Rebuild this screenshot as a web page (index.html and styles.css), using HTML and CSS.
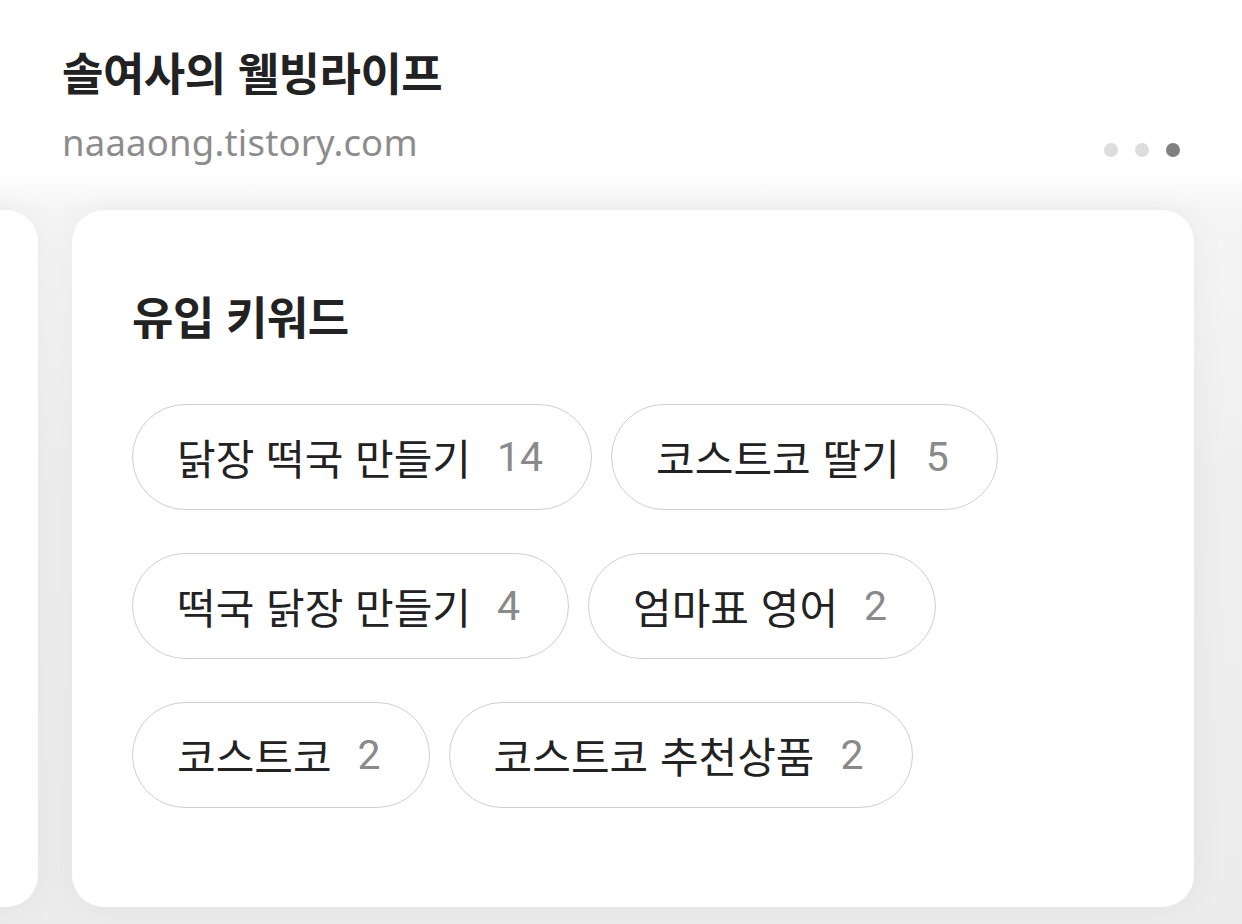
FILE: index.html
```html
<!DOCTYPE html>
<html lang="ko">
<head>
<meta charset="utf-8">
<title>유입 키워드</title>
<link rel="stylesheet" href="styles.css">
</head>
<body>
<header class="header">
  <h1 class="blog-title">솔여사의 웰빙라이프</h1>
  <div class="url-row">
    <span class="blog-url">naaaong.tistory.com</span>
    <div class="dots">
      <span class="dot"></span>
      <span class="dot"></span>
      <span class="dot dot-active"></span>
    </div>
  </div>
</header>
<section class="carousel">
  <div class="card card-peek"></div>
  <div class="card card-main">
    <h2 class="card-title">유입 키워드</h2>
    <div class="chips">
      <span class="chip"><span class="chip-text">닭장 떡국 만들기</span><span class="chip-count">14</span></span>
      <span class="chip"><span class="chip-text">코스트코 딸기</span><span class="chip-count">5</span></span>
      <span class="chip"><span class="chip-text">떡국 닭장 만들기</span><span class="chip-count">4</span></span>
      <span class="chip"><span class="chip-text">엄마표 영어</span><span class="chip-count">2</span></span>
      <span class="chip"><span class="chip-text">코스트코</span><span class="chip-count">2</span></span>
      <span class="chip"><span class="chip-text">코스트코 추천상품</span><span class="chip-count">2</span></span>
    </div>
  </div>
</section>
</body>
</html>
```

FILE: styles.css
```css
html, body {
  margin: 0;
  padding: 0;
}
body {
  width: 1242px;
  height: 924px;
  overflow: hidden;
  background: #ffffff;
  font-family: "Noto Sans CJK KR", "Noto Sans", sans-serif;
  color: #222222;
}
.header {
  padding: 44px 62px 0 62px;
  height: 126px;
}
.blog-title {
  margin: 0;
  font-size: 45px;
  line-height: 56px;
  font-weight: 700;
  letter-spacing: -0.5px;
  color: #222222;
}
.url-row {
  display: flex;
  justify-content: space-between;
  align-items: center;
  margin-top: 18px;
}
.blog-url {
  font-family: "Noto Sans", sans-serif;
  font-size: 36.5px;
  line-height: 48px;
  color: #8c8c8c;
  letter-spacing: 0.2px;
}
.dots {
  display: flex;
  gap: 17px;
  margin-top: 16px;
}
.dot {
  width: 14px;
  height: 14px;
  border-radius: 50%;
  background: #dddddd;
}
.dot-active {
  background: #808080;
}
.carousel {
  display: flex;
  justify-content: flex-end;
  gap: 34px;
  padding: 40px 48px 18px 0;
  background: linear-gradient(#ffffff 0px, #f5f5f5 40px, #efefef 300px, #ececec 100%);
  overflow: hidden;
}
.card {
  flex-shrink: 0;
  background: #ffffff;
  border-radius: 32px;
  box-shadow: 0 0 36px rgba(0, 0, 0, 0.05);
}
.card-peek {
  width: 600px;
}
.card-main {
  width: 1122px;
  box-sizing: border-box;
  padding: 80px 60px 99px 60px;
}
.card-title {
  margin: 0;
  font-size: 45px;
  line-height: 52px;
  font-weight: 700;
  letter-spacing: -0.5px;
  color: #222222;
}
.chips {
  margin-top: 62px;
  display: flex;
  flex-wrap: wrap;
  column-gap: 19px;
  row-gap: 43px;
  width: 900px;
}
.chip {
  display: inline-flex;
  align-items: center;
  gap: 26px;
  height: 106px;
  box-sizing: border-box;
  padding: 0 48px 0 44px;
  border: 1.5px solid #cfcfcf;
  border-radius: 53px;
  background: #ffffff;
}
.chip-text {
  font-size: 42px;
  color: #222222;
  line-height: 1;
}
.chip-count {
  font-family: Roboto, "Noto Sans", sans-serif;
  font-size: 41px;
  color: #8a8a8a;
  line-height: 1;
}
```
